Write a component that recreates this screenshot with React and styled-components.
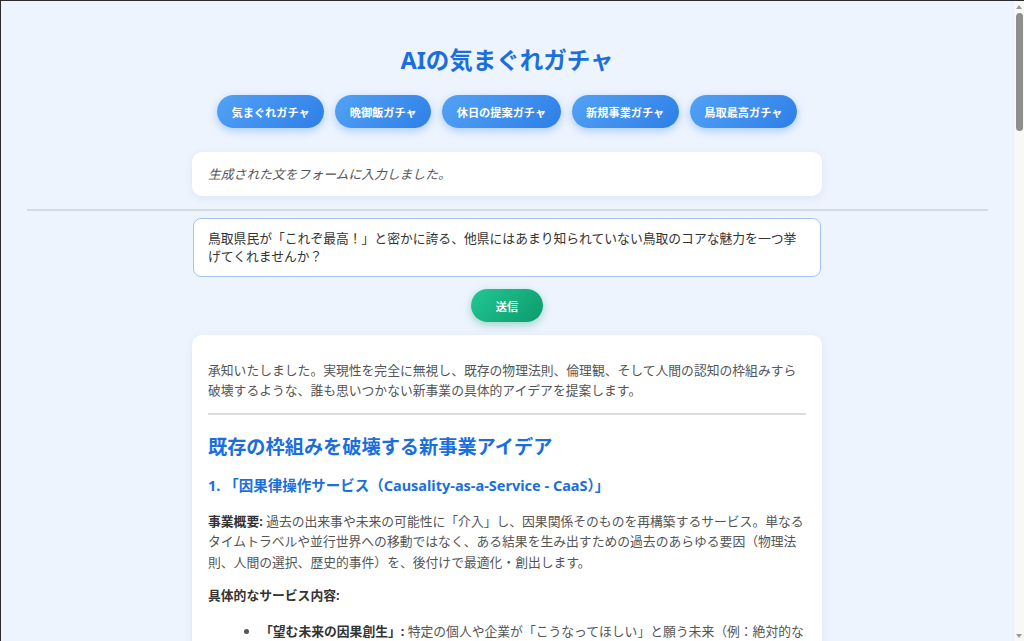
import React from 'react';
import styled, { createGlobalStyle } from 'styled-components';

const GlobalStyle = createGlobalStyle`
    html, body {
        margin: 0;
        padding: 0;
    }
    body {
        font-family: "Noto Sans", "Noto Sans CJK JP", sans-serif;
        color: #555;
    }
`;

const Frame = styled.div`
    display: flex;
    height: 100vh;
    box-sizing: border-box;
    border-top: 1px solid #2b2b2b;
    border-left: 1px solid #2b2b2b;
    background: #edf4fe;
`;

const Viewport = styled.div`
    flex: 1;
    min-width: 0;
    overflow-y: auto;
    scrollbar-width: none;
`;

// browser scrollbar as seen in the screenshot
const ScrollTrack = styled.div`
    width: 11px;
    flex-shrink: 0;
    display: flex;
    flex-direction: column;
    align-items: center;
    padding: 4px 0 3px;
    box-sizing: border-box;
    background: #f8f8f8;
    border-left: 1px solid #efefef;
`;

const Arrow = styled.div`
    width: 0;
    height: 0;
    border-left: 3px solid transparent;
    border-right: 3px solid transparent;
    ${props => props.down
        ? 'border-top: 4px solid #9a9a9a; margin-top: auto;'
        : 'border-bottom: 4px solid #9a9a9a;'}
`;

const Thumb = styled.div`
    width: 7px;
    height: 118px;
    margin-top: 4px;
    border-radius: 4px;
    background: #8e8e8e;
`;

const Page = styled.div`
    padding: 44px 0 48px;
`;

const Title = styled.h1`
    margin: 0;
    text-align: center;
    font-size: 23.5px;
    line-height: 30px;
    font-weight: 700;
    color: #1b6fdc;
`;

const ButtonRow = styled.div`
    display: flex;
    justify-content: center;
    gap: 11px;
    margin-top: 20px;
`;

const PillButton = styled.button`
    height: 33px;
    padding: 0 ${props => props.wide ? 25 : 14.5}px;
    border: none;
    border-radius: 999px;
    background: ${props => props.green
        ? 'linear-gradient(135deg, #22c894 0%, #0c9a6b 100%)'
        : 'linear-gradient(135deg, #52a2f5 0%, #2e7fe7 100%)'};
    color: #fff;
    font-family: inherit;
    font-size: 11.2px;
    font-weight: 700;
    box-shadow: 0 3px 8px ${props => props.green
        ? 'rgba(12, 154, 107, 0.35)'
        : 'rgba(46, 127, 231, 0.35)'};
    cursor: pointer;
`;

const Column = styled.div`
    width: 630px;
    margin: 0 auto;
`;

const StatusCard = styled.div`
    margin-top: 24px;
    padding: 12.5px 16px;
    background: #fff;
    border-radius: 10px;
    box-shadow: 0 2px 8px rgba(30, 60, 120, 0.08);
    font-size: 12.8px;
    line-height: 19px;
    font-style: italic;
    color: #555;
`;

const Divider = styled.hr`
    border: none;
    height: 2px;
    background: #d2dae6;
    margin: 13px 25px 7px 26px;
`;

const Prompt = styled.textarea`
    display: block;
    width: 628px;
    height: 59px;
    margin: 0 auto;
    box-sizing: border-box;
    padding: 11px 14px;
    border: 1px solid #a8c2ee;
    border-radius: 8px;
    background: #fff;
    font-family: inherit;
    font-size: 12.8px;
    line-height: 1.4;
    color: #333;
    resize: none;
    outline: none;
    overflow: hidden;
`;

const SendRow = styled.div`
    display: flex;
    justify-content: center;
    margin-top: 12px;
`;

const ResultCard = styled.div`
    margin-top: 13px;
    padding: 25px 16px 24px;
    background: #fff;
    border-radius: 10px;
    box-shadow: 0 2px 8px rgba(30, 60, 120, 0.08);
    font-size: 12.8px;
    line-height: 1.6;
    color: #555;
`;

const Para = styled.p`
    margin: 0 0 13px;
`;

const Intro = styled.p`
    margin: 0;
`;

const Rule = styled.hr`
    border: none;
    height: 2px;
    background: #dcdcdc;
    margin: 12px 0 19px;
`;

const Heading = styled.h2`
    margin: 0 0 16px;
    font-size: 19.2px;
    line-height: 25px;
    font-weight: 700;
    color: #1b6fdc;
`;

const SubHeading = styled.h3`
    margin: 0 0 16px;
    font-size: 14.5px;
    line-height: 20px;
    font-weight: 700;
    color: #1b6fdc;
`;

const Strong = styled.strong`
    color: #333;
    font-weight: 700;
`;

const List = styled.ul`
    margin: 15px 0 14px;
    padding-left: 52px;
`;

const Item = styled.li`
    margin-bottom: 6px;
`;

const gachas = ['気まぐれガチャ', '晩御飯ガチャ', '休日の提案ガチャ', '新規事業ガチャ', '鳥取最高ガチャ'];

const ideas = [
    {
        title: '1. 「因果律操作サービス（Causality-as-a-Service - CaaS）」',
        summary: '過去の出来事や未来の可能性に「介入」し、因果関係そのものを再構築するサービス。単なるタイムトラベルや並行世界への移動ではなく、ある結果を生み出すための過去のあらゆる要因（物理法則、人間の選択、歴史的事件）を、後付けで最適化・創出します。',
        items: [
            ['「望む未来の因果創生」', '特定の個人や企業が「こうなってほしい」と願う未来（例：絶対的な成功、永遠の愛、完全な健康）を実現するために、過去に遡って必要な因果の連鎖を設計し、世界に挿入します。'],
            ['「後悔の因果消去」', '人生で最も後悔している選択を特定し、その選択に至った原因そのものを過去から消去します。記憶は残りますが、その出来事は「最初から起こり得なかった」ことになります。'],
            ['「因果律保険」', '将来起こり得る不運な出来事に対し、発生前に因果の糸を切断しておく保険商品。月額制で、契約者の周囲の確率場を常時監視します。'],
        ],
        revenue: '因果の改変規模に応じた従量課金制。改変が宇宙全体に及ぶ場合は、別途「存在維持税」を請求します。',
    },
    {
        title: '2. 「集合的無意識マーケットプレイス」',
        summary: '人類が共有する無意識の領域に直接アクセスし、夢、直感、既視感といった「言語化される前の思考」を売買できる市場を開設します。',
        items: [
            ['「夢の先物取引」', 'まだ誰も見ていない夢を先に購入し、指定した夜に配信します。人気の夢は高値で取引され、夢見の名手には印税が支払われます。'],
            ['「直感の共有」', '歴史上の天才たちがひらめいた瞬間の直感を抽出し、パッケージ化して販売します。'],
            ['「既視感の演出」', '初めての場所や出会いに、意図的に懐かしさを付与するサービス。恋愛や観光産業向けに提供します。'],
        ],
        revenue: '取引手数料と、集合的無意識へのアクセス権のサブスクリプション収入。',
    },
    {
        title: '3. 「時間密度レンタル」',
        summary: '時間の流れる速さを局所的に変化させ、「濃い時間」と「薄い時間」を貸し出します。退屈な会議は一瞬で終わり、大切な人との時間は何倍にも引き伸ばせます。',
        items: [
            ['「濃縮時間パック」', '1分間の中に1日分の体験を詰め込み、忙しい現代人の自由時間を確保します。'],
            ['「時間の貯金口座」', '使わなかった時間を口座に預け入れ、人生の好きなタイミングで引き出せます。利息は時間で支払われます。'],
        ],
        revenue: '時間の貸出量に応じたレンタル料と、口座管理手数料。',
    },
];

export default function App() {
    return <>
        <GlobalStyle />
        <Frame>
            <Viewport>
                <Page>
                    <Title>AIの気まぐれガチャ</Title>
                    <ButtonRow>
                        {gachas.map(label => <PillButton key={label}>{label}</PillButton>)}
                    </ButtonRow>
                    <Column>
                        <StatusCard>生成された文をフォームに入力しました。</StatusCard>
                    </Column>
                    <Divider />
                    <Column>
                        <Prompt
                            readOnly
                            defaultValue="鳥取県民が「これぞ最高！」と密かに誇る、他県にはあまり知られていない鳥取のコアな魅力を一つ挙げてくれませんか？" />
                        <SendRow>
                            <PillButton green wide>送信</PillButton>
                        </SendRow>
                        <ResultCard>
                            <Intro>承知いたしました。実現性を完全に無視し、既存の物理法則、倫理観、そして人間の認知の枠組みすら破壊するような、誰も思いつかない新事業の具体的アイデアを提案します。</Intro>
                            <Rule />
                            <Heading>既存の枠組みを破壊する新事業アイデア</Heading>
                            {ideas.map(idea => <div key={idea.title}>
                                <SubHeading>{idea.title}</SubHeading>
                                <Para><Strong>事業概要:</Strong> {idea.summary}</Para>
                                <Para><Strong>具体的なサービス内容:</Strong></Para>
                                <List>
                                    {idea.items.map(([name, text]) =>
                                        <Item key={name}><Strong>{name}:</Strong> {text}</Item>
                                    )}
                                </List>
                                <Para><Strong>収益モデル:</Strong> {idea.revenue}</Para>
                                <Rule />
                            </div>)}
                            <Para>いずれのアイデアも、現在の科学技術では実現不可能ですが、だからこそ誰も手をつけていない巨大な市場が眠っています。</Para>
                        </ResultCard>
                    </Column>
                </Page>
            </Viewport>
            <ScrollTrack>
                <Arrow />
                <Thumb />
                <Arrow down />
            </ScrollTrack>
        </Frame>
    </>;
}
